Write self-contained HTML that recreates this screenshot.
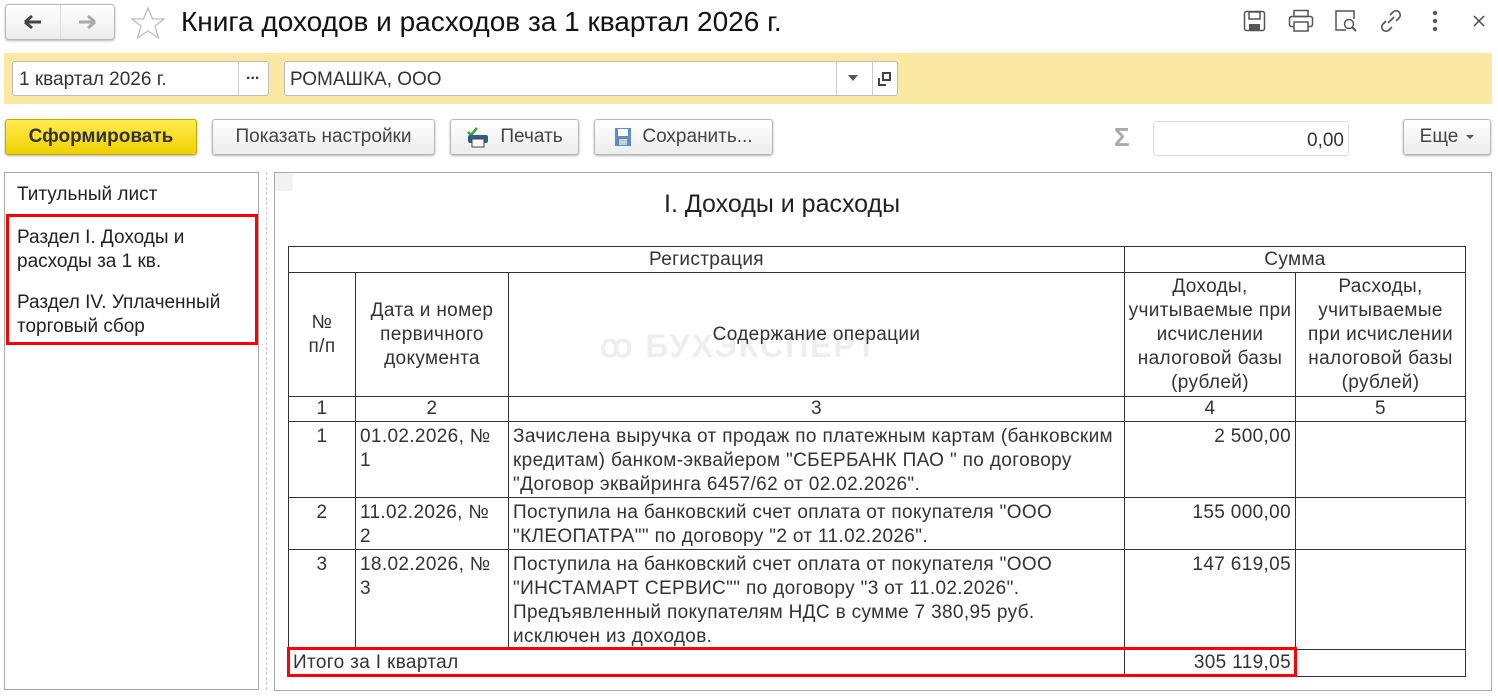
<!DOCTYPE html>
<html><head><meta charset="utf-8"><style>
*{box-sizing:border-box;margin:0;padding:0}
body{width:1498px;height:696px;background:#fff;font-family:"Liberation Sans",Arial,sans-serif;color:#333;position:relative;overflow:hidden;font-size:19px}
.a{position:absolute}
.btn{position:absolute;border:1px solid #b8b8b8;border-radius:3px;background:linear-gradient(#fff,#ececec);box-shadow:0 1px 2px rgba(0,0,0,.3);font-size:19px;color:#444;display:flex;align-items:center;justify-content:center}
.inp{position:absolute;background:#fff;border:1px solid #bdbdbd;border-radius:3px}
table{position:absolute;left:288px;top:246px;border-collapse:collapse;table-layout:fixed;font-size:19px;color:#333;letter-spacing:0.35px}
td{border:1px solid #333;line-height:24px;vertical-align:top;padding:0 4px;white-space:nowrap;overflow:hidden}
td.t{padding-top:3px}
.c{text-align:center}.r{text-align:right}.m{vertical-align:middle}
</style></head><body>
<div class="btn" style="left:5px;top:4px;width:110px;height:36px;border-radius:4px;justify-content:flex-start">
<div style="width:55px;height:34px;border-right:1px solid #ddd;display:flex;align-items:center;justify-content:center"><svg width="20" height="16"><path d="M2 8H18M2 8L9 2M2 8L9 14" stroke="#444" stroke-width="3" fill="none"/></svg></div>
<div style="width:54px;display:flex;justify-content:center"><svg width="20" height="16"><path d="M2 8H18M18 8L11 2M18 8L11 14" stroke="#aaa" stroke-width="3" fill="none"/></svg></div></div>
<svg class="a" style="left:130px;top:6px" width="36" height="34"><path d="M18 2L22.5 13H34L25 20L28.5 32L18 25L7.5 32L11 20L2 13H13.5Z" fill="none" stroke="#bbb" stroke-width="1.3"/></svg>
<div class="a" style="left:181px;top:6px;font-size:28px;color:#111">Книга доходов и расходов за 1 квартал 2026 г.</div>
<svg class="a" style="left:1243px;top:10px" width="24" height="22"><rect x="1.5" y="1.5" width="20" height="19" rx="2" fill="none" stroke="#555" stroke-width="1.5"/><rect x="6" y="2" width="11" height="7" fill="none" stroke="#555" stroke-width="1.5"/><rect x="6" y="14" width="11" height="6" fill="#555"/></svg>
<svg class="a" style="left:1288px;top:9px" width="26" height="24"><rect x="6" y="1.5" width="14" height="6" fill="none" stroke="#555" stroke-width="1.5"/><rect x="1.5" y="7.5" width="23" height="10" rx="2" fill="none" stroke="#555" stroke-width="1.5"/><rect x="6" y="13" width="14" height="9" fill="#fff" stroke="#555" stroke-width="1.5"/></svg>
<svg class="a" style="left:1334px;top:9px" width="26" height="24"><path d="M12 21H2V2H20V10" fill="none" stroke="#555" stroke-width="1.5"/><circle cx="15" cy="15" r="4.5" fill="none" stroke="#555" stroke-width="1.5"/><path d="M18 18L22 22" stroke="#555" stroke-width="2"/></svg>
<svg class="a" style="left:1378px;top:9px" width="26" height="24"><path d="M10 14L16 8M12 6l3-3a4 4 0 016 6l-3 3M14 18l-3 3a4 4 0 01-6-6l3-3" fill="none" stroke="#555" stroke-width="1.6"/></svg>
<svg class="a" style="left:1431px;top:10px" width="8" height="22"><circle cx="4" cy="3" r="2.2" fill="#555"/><circle cx="4" cy="11" r="2.2" fill="#555"/><circle cx="4" cy="19" r="2.2" fill="#555"/></svg>
<svg class="a" style="left:1472px;top:14px" width="14" height="14"><path d="M2 2L12 12M12 2L2 12" stroke="#444" stroke-width="1.4"/></svg>
<div class="a" style="left:4px;top:53px;width:1488px;height:51px;background:#fbe9a3"></div>
<div class="inp" style="left:12px;top:61px;width:257px;height:35px"><div class="a" style="left:6px;top:7px;font-size:19px">1 квартал 2026 г.</div><div class="a" style="left:225px;top:0;width:1px;height:33px;background:#ccc"></div><div class="a" style="left:233px;top:4px;font-size:16px;font-weight:bold">...</div></div>
<div class="inp" style="left:284px;top:61px;width:614px;height:35px"><div class="a" style="left:5px;top:7px;font-size:19px">РОМАШКА, ООО</div><div class="a" style="left:551px;top:0;width:1px;height:33px;background:#ccc"></div><svg class="a" style="left:563px;top:13px" width="10" height="6"><path d="M0 0H10L5 6Z" fill="#555"/></svg><div class="a" style="left:587px;top:0;width:1px;height:33px;background:#ccc"></div><svg class="a" style="left:592px;top:9px" width="16" height="16"><path d="M2 7V14H9" fill="none" stroke="#444" stroke-width="2"/><rect x="6" y="2" width="7" height="7" fill="none" stroke="#444" stroke-width="2"/></svg></div>
<div class="btn" style="left:5px;top:119px;width:192px;height:36px;background:linear-gradient(#ffec50,#f0d000);border-color:#c9a800;font-weight:bold;font-size:19px;color:#333">Сформировать</div>
<div class="btn" style="left:212px;top:119px;width:223px;height:36px">Показать настройки</div>
<div class="btn" style="left:450px;top:119px;width:129px;height:36px"><svg width="24" height="22" style="margin-right:10px"><path d="M2 6L5 9L11 2" stroke="#3a3" stroke-width="2.5" fill="none"/><rect x="2" y="9" width="20" height="8" rx="2" fill="#2d5f8e"/><rect x="6" y="13" width="12" height="8" fill="#fff" stroke="#444"/></svg>Печать</div>
<div class="btn" style="left:594px;top:119px;width:179px;height:36px"><svg width="18" height="20" style="margin-right:10px"><rect x="1" y="1" width="16" height="18" fill="#5c8fc4"/><rect x="4" y="2" width="10" height="7" fill="#fff"/><rect x="5" y="12" width="8" height="6" fill="#ccc"/></svg>Сохранить...</div>
<div class="a" style="left:1114px;top:122px;font-size:26px;color:#aaa;font-weight:bold">Σ</div>
<div class="inp" style="left:1153px;top:121px;width:196px;height:35px;border-color:#ddd"><div class="a" style="right:4px;top:8px;font-size:19px">0,00</div></div>
<div class="btn" style="left:1403px;top:119px;width:88px;height:36px;font-size:19px">Еще<svg width="8" height="5" style="margin-left:8px"><path d="M0 0H8L4 4Z" fill="#555"/></svg></div>
<div class="a" style="left:4px;top:172px;width:255px;height:518px;border:1px solid #aaa"></div>
<div class="a" style="left:17px;top:184px;font-size:19px;color:#222">Титульный лист</div>
<div class="a" style="left:6px;top:214px;width:252px;height:131px;border:3px solid #f00"></div>
<div class="a" style="left:17px;top:226px;font-size:19px;line-height:24px;color:#222">Раздел I. Доходы и<br>расходы за 1 кв.</div>
<div class="a" style="left:17px;top:291px;font-size:19px;line-height:24px;color:#222">Раздел IV. Уплаченный<br>торговый сбор</div>
<div class="a" style="left:266px;top:172px;height:518px;border-left:1px dashed #ccc"></div>
<div class="a" style="left:274px;top:172px;width:1218px;height:519px;border:1px solid #aaa"></div>
<div class="a" style="left:275px;top:173px;width:18px;height:18px;background:#f2f2f2"></div>
<div class="a" style="left:664px;top:190px;font-size:25px;color:#222">I. Доходы и расходы</div>
<div class="a" style="left:600px;top:327px;font-size:32px;font-weight:bold;color:#eeeef2;letter-spacing:2px">ꝏ БУХЭКСПЕРТ</div>
<table>
<colgroup><col style="width:67px"><col style="width:153px"><col style="width:616px"><col style="width:171px"><col style="width:170px"></colgroup>
<tr style="height:26px"><td colspan="3" class="c" style="padding-top:1px">Регистрация</td><td colspan="2" class="c" style="padding-top:1px">Сумма</td></tr>
<tr style="height:124px"><td class="c m">№<br>п/п</td><td class="c m">Дата и номер<br>первичного<br>документа</td><td class="c m">Содержание операции</td><td class="c" style="padding:2px 0 0">Доходы,<br>учитываемые при<br>исчислении<br>налоговой базы<br>(рублей)</td><td class="c" style="padding:2px 0 0">Расходы,<br>учитываемые<br>при исчислении<br>налоговой базы<br>(рублей)</td></tr>
<tr style="height:24px"><td class="c">1</td><td class="c">2</td><td class="c">3</td><td class="c">4</td><td class="c">5</td></tr>
<tr style="height:76px"><td class="c t">1</td><td class="t">01.02.2026, №<br>1</td><td class="t">Зачислена выручка от продаж по платежным картам (банковским<br>кредитам) банком-эквайером "СБЕРБАНК ПАО " по договору<br>"Договор эквайринга 6457/62 от 02.02.2026".</td><td class="r t">2 500,00</td><td></td></tr>
<tr style="height:51px"><td class="c t">2</td><td class="t">11.02.2026, №<br>2</td><td class="t">Поступила на банковский счет оплата от покупателя "ООО<br>"КЛЕОПАТРА"" по договору "2 от 11.02.2026".</td><td class="r t">155 000,00</td><td></td></tr>
<tr style="height:100px"><td class="c t">3</td><td class="t">18.02.2026, №<br>3</td><td class="t">Поступила на банковский счет оплата от покупателя "ООО<br>"ИНСТАМАРТ СЕРВИС"" по договору "3 от 11.02.2026".<br>Предъявленный покупателям НДС в сумме 7 380,95 руб.<br>исключен из доходов.</td><td class="r t">147 619,05</td><td></td></tr>
<tr style="height:27px"><td colspan="3" style="padding-top:1px">Итого за I квартал</td><td class="r" style="padding-top:1px">305 119,05</td><td></td></tr>
</table>
<div class="a" style="left:287px;top:647px;width:1010px;height:30px;border:3px solid #f00"></div>
</body></html>
